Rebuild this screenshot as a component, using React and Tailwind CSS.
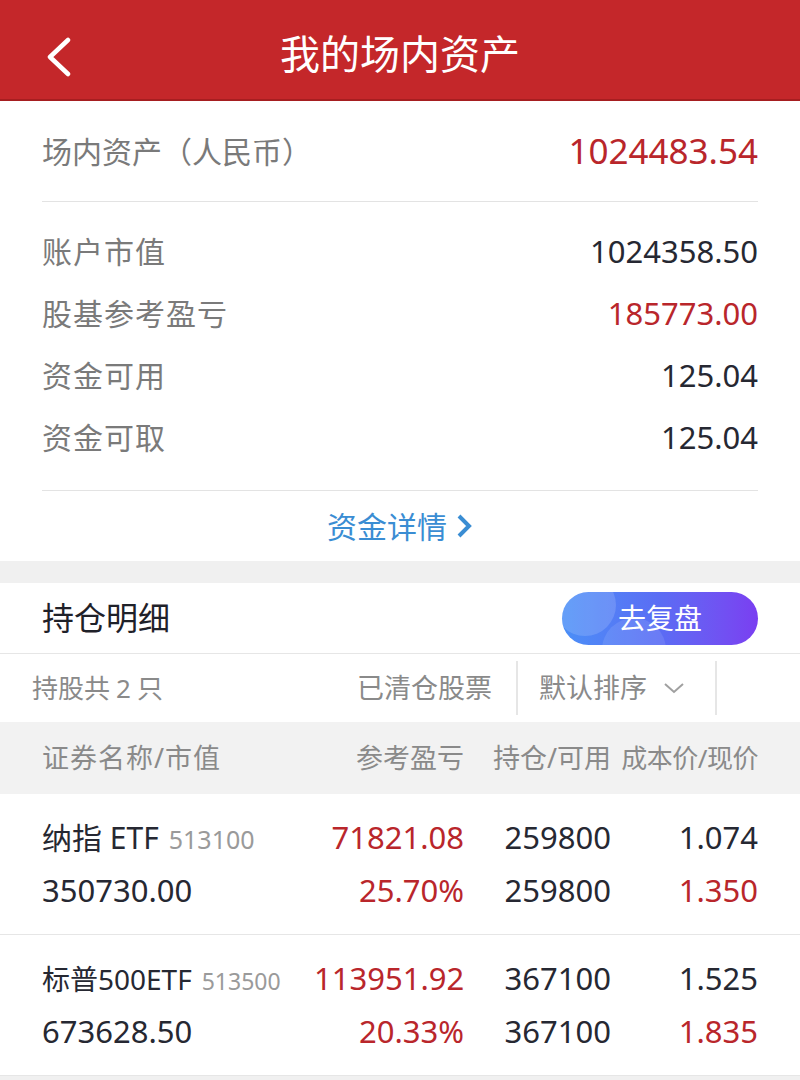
import React from 'react';

const font = "font-['Noto_Sans','Noto_Sans_CJK_SC',sans-serif]";
const red = 'text-[#b9262b]';
const dark = 'text-[#262832]';

const summary = [
  { label: '账户市值', value: '1024358.50' },
  { label: '股基参考盈亏', value: '185773.00', red: true },
  { label: '资金可用', value: '125.04' },
  { label: '资金可取', value: '125.04' },
];

const holdings = [
  {
    name: '纳指 ETF',
    code: '513100',
    small: false,
    pnl: '71821.08',
    value: '350730.00',
    pct: '25.70%',
    qty: '259800',
    avail: '259800',
    cost: '1.074',
    price: '1.350',
  },
  {
    name: '标普500ETF',
    code: '513500',
    small: true,
    pnl: '113951.92',
    value: '673628.50',
    pct: '20.33%',
    qty: '367100',
    avail: '367100',
    cost: '1.525',
    price: '1.835',
  },
];

const HoldingRow = ({ h }) => (
  <div className="px-[42px] py-[17px] border-b border-[#e6e6e6] text-[31px]">
    <div className="flex items-center h-[53px]">
      <div className="flex-1 flex items-baseline whitespace-nowrap">
        <span className={`${dark} ${h.small ? 'text-[28px]' : 'text-[30px]'}`}>{h.name}</span>
        <span className={`text-[#9a9a9a] ml-[10px] ${h.small ? 'text-[23px]' : 'text-[25px]'}`}>{h.code}</span>
      </div>
      <div className={`w-[150px] text-right ${red}`}>{h.pnl}</div>
      <div className={`w-[147px] text-right ${dark}`}>{h.qty}</div>
      <div className={`w-[147px] text-right ${dark}`}>{h.cost}</div>
    </div>
    <div className="flex items-center h-[53px]">
      <div className={`flex-1 ${dark}`}>{h.value}</div>
      <div className={`w-[150px] text-right ${red}`}>{h.pct}</div>
      <div className={`w-[147px] text-right ${dark}`}>{h.avail}</div>
      <div className={`w-[147px] text-right ${red}`}>{h.price}</div>
    </div>
  </div>
);

export default function App() {
  return (
    <div className={`w-[800px] min-h-[1080px] bg-[#f0f0f0] ${font}`}>
      {/* top bar */}
      <div className="h-[101px] bg-[#c4272a] border-b-2 border-[#a61e20] flex items-center relative">
        <svg className="absolute left-[44px] top-[37px]" width="30" height="40" viewBox="0 0 30 40">
          <polyline points="24,3 6,20 24,37" fill="none" stroke="#fff" strokeWidth="4.5" strokeLinecap="round" strokeLinejoin="round" />
        </svg>
        <div className="flex-1 text-center text-white text-[40px] leading-none pt-[8px]">我的场内资产</div>
      </div>

      {/* assets */}
      <div className="bg-white px-[42px]">
        <div className="h-[101px] flex items-center justify-between border-b border-[#e3e3e3]">
          <span className="text-[30px] text-[#7a7a7a]">场内资产（人民币）</span>
          <span className={`text-[35px] ${red}`}>1024483.54</span>
        </div>
        <div className="pt-[18px] pb-[22px] border-b border-[#e3e3e3]">
          {summary.map((s) => (
            <div key={s.label} className="h-[62px] flex items-center justify-between">
              <span className="text-[30px] text-[#7a7a7a] tracking-[1px]">{s.label}</span>
              <span className={`text-[31px] ${s.red ? red : dark}`}>{s.value}</span>
            </div>
          ))}
        </div>
        <div className="h-[70px] flex items-center justify-center text-[#3a8dd3] text-[30px]">
          <span>资金详情</span>
          <svg className="ml-[8px]" width="18" height="26" viewBox="0 0 18 26">
            <polyline points="4,3 14,13 4,23" fill="none" stroke="#3a8dd3" strokeWidth="4" strokeLinejoin="miter" />
          </svg>
        </div>
      </div>

      <div className="h-[22px]" />

      {/* holdings */}
      <div className="bg-white">
        <div className="h-[71px] flex items-center justify-between pl-[42px] pr-[42px] border-b border-[#e6e6e6]">
          <span className="text-[32px] text-[#1f2129]">持仓明细</span>
          <div className="relative w-[196px] h-[53px] rounded-full overflow-hidden bg-linear-to-r from-[#4a8ff7] via-[#5a6cf4] to-[#7a3ef1] flex items-center justify-center">
            <div className="absolute -left-[8px] -top-[18px] w-[62px] h-[62px] rounded-full bg-white/15" />
            <div className="absolute left-[40px] top-[26px] w-[64px] h-[64px] rounded-full bg-white/10" />
            <span className="relative text-white text-[28px]">去复盘</span>
          </div>
        </div>

        <div className="h-[68px] flex items-center text-[#8a8a8a] text-[26px]">
          <div className="flex-1 pl-[32px] flex items-center">
            <span>持股共</span>
            <span className="mx-[6px]">2</span>
            <span>只</span>
          </div>
          <span className="pr-[24px] text-[27px]">已清仓股票</span>
          <div className="w-[201px] h-[54px] border-l-2 border-r-2 border-[#e6e6e6] flex items-center pl-[21px] text-[27px]">
            <span>默认排序</span>
            <svg className="ml-[16px]" width="22" height="14" viewBox="0 0 22 14">
              <polyline points="2,3 11,11 20,3" fill="none" stroke="#a0a0a0" strokeWidth="2" />
            </svg>
          </div>
          <div className="w-[83px]" />
        </div>

        <div className="h-[72px] bg-[#f2f2f2] flex items-center px-[42px] text-[27px] text-[#8a8a8a]">
          <div className="flex-1 tracking-[1px]">证券名称/市值</div>
          <div className="w-[150px] text-right">参考盈亏</div>
          <div className="w-[147px] text-right">持仓/可用</div>
          <div className="w-[147px] text-right whitespace-nowrap text-[26px] tracking-[-0.5px]">成本价/现价</div>
        </div>

        {holdings.map((h) => (
          <HoldingRow key={h.code} h={h} />
        ))}
      </div>
    </div>
  );
}
